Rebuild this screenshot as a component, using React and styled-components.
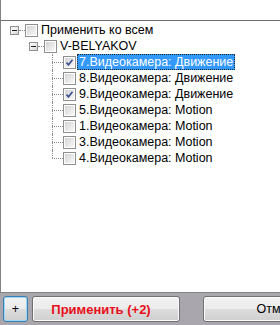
import React from "react";
import styled, { createGlobalStyle } from "styled-components";

const Global = createGlobalStyle`
  html, body { margin: 0; padding: 0; }
  body {
    width: 280px;
    height: 325px;
    overflow: hidden;
    background: #aaa6ad;
    font-family: "Liberation Sans", Arial, sans-serif;
    font-size: 12.5px;
    color: #000;
  }
`;

const Frame = styled.div`
  display: flex;
  flex-direction: column;
  width: 280px;
  height: 325px;
`;

const TopBox = styled.div`
  height: 20px;
  background: #fff;
  border-left: 1px solid #828282;
  border-bottom: 1px solid #6e6e6e;
`;

const TreePanel = styled.div`
  height: 270px;
  background: #fff;
  border-left: 1px solid #828282;
  border-bottom: 1px solid #828282;
  padding-top: 1px;
  display: flex;
  flex-direction: column;
`;

const Row = styled.div`
  display: flex;
  align-items: center;
  height: 16px;
  padding-left: ${(p) => p.$level * 19 + 9}px;
  white-space: nowrap;
`;

const Expander = styled.span`
  box-sizing: border-box;
  width: 9px;
  height: 9px;
  border: 1px solid #919191;
  background: linear-gradient(135deg, #ffffff 0%, #f0f0f0 45%, #d4d4d4 100%);
  display: flex;
  align-items: center;
  justify-content: center;
  &::before {
    content: "";
    width: 5px;
    height: 1px;
    background: #1c1c1c;
  }
`;

const Connector = styled.span`
  width: 6px;
  height: 1px;
  border-top: 1px dotted #8a8a8a;
  margin-top: 1px;
`;

const LineCell = styled.span`
  display: grid;
  grid-template-columns: 4px 1px 10px;
  grid-template-rows: 8px 8px;
  width: 15px;
  height: 16px;
`;

const VLine = styled.span`
  grid-column: 2;
  grid-row: ${(p) => (p.$last ? "1" : "1 / 3")};
  border-left: 1px dotted #8a8a8a;
`;

const HLine = styled.span`
  grid-column: 2 / 4;
  grid-row: 2;
  border-top: 1px dotted #8a8a8a;
`;

const Check = styled.span`
  box-sizing: border-box;
  width: 13px;
  height: 13px;
  border: 1px solid #8e8f8f;
  padding: 1px;
  background: #fff;
  display: flex;
  flex: none;
  & > span {
    flex: 1;
    background: linear-gradient(135deg, #d4d4d4 0%, #e6e6e6 50%, #f8f8f8 100%);
    display: flex;
    align-items: center;
    justify-content: center;
  }
`;

const Label = styled.span`
  margin-left: 1px;
  padding: 0 2px;
  height: 16px;
  line-height: 16px;
  box-sizing: border-box;
  background: ${(p) => (p.$selected ? "#3399ff" : "transparent")};
  color: ${(p) => (p.$selected ? "#fff" : "#000")};
  outline: ${(p) => (p.$selected ? "1px dotted #1d2a3a" : "none")};
  outline-offset: -1px;
`;

const ButtonRow = styled.div`
  display: flex;
  padding: 3px 0 0 3px;
  gap: 4px;
`;

const Button = styled.button`
  box-sizing: border-box;
  height: 26px;
  width: ${(p) => p.$w}px;
  flex: none;
  margin-left: ${(p) => p.$ml || 0}px;
  border: 1px solid ${(p) => (p.$focus ? "#3c7fb1" : "#707070")};
  border-radius: 3px;
  background: linear-gradient(#f2f2f2 0%, #ebebeb 50%, #dddddd 50%, #cfcfcf 100%);
  box-shadow: inset 0 0 0 1px ${(p) => (p.$focus ? "#9fd5f4" : "#fbfbfb")};
  font-family: "Liberation Sans", Arial, sans-serif;
  font-size: ${(p) => (p.$danger ? 13 : 12.5)}px;
  font-weight: ${(p) => (p.$danger ? "bold" : "normal")};
  color: ${(p) => (p.$danger ? "#e8101a" : "#000")};
  padding: 0 ${(p) => (p.$pr || 0)}px 0 0;
  text-align: center;
  white-space: nowrap;
  overflow: hidden;
`;

const CheckMark = () => (
  <svg width="7" height="7" viewBox="0 0 7 7">
    <path d="M0.5 3.5 L2.5 5.8 L6.5 0.8" fill="none" stroke="#3b4f8f" strokeWidth="1.6" />
  </svg>
);

const CheckBox = ({ checked }) => (
  <Check>
    <span>{checked && <CheckMark />}</span>
  </Check>
);

const cameras = [
  { label: "7.Видеокамера: Движение", checked: true, selected: true },
  { label: "8.Видеокамера: Движение" },
  { label: "9.Видеокамера: Движение", checked: true },
  { label: "5.Видеокамера: Motion" },
  { label: "1.Видеокамера: Motion" },
  { label: "3.Видеокамера: Motion" },
  { label: "4.Видеокамера: Motion" },
];

export default function App() {
  return (
    <>
      <Global />
      <Frame>
        <TopBox />
        <TreePanel>
          <Row $level={0}>
            <Expander />
            <Connector />
            <CheckBox />
            <Label>Применить ко всем</Label>
          </Row>
          <Row $level={1}>
            <Expander />
            <Connector />
            <CheckBox />
            <Label>V-BELYAKOV</Label>
          </Row>
          {cameras.map((c, i) => (
            <Row $level={2} key={c.label}>
              <LineCell>
                <VLine $last={i === cameras.length - 1} />
                <HLine />
              </LineCell>
              <CheckBox checked={c.checked} />
              <Label $selected={c.selected}>{c.label}</Label>
            </Row>
          ))}
        </TreePanel>
        <ButtonRow>
          <Button $w={25} $focus>+</Button>
          <Button $w={148} $danger $pr={10}>Применить (+2)</Button>
          <Button $w={152} $ml={19}>Отмена</Button>
        </ButtonRow>
      </Frame>
    </>
  );
}
